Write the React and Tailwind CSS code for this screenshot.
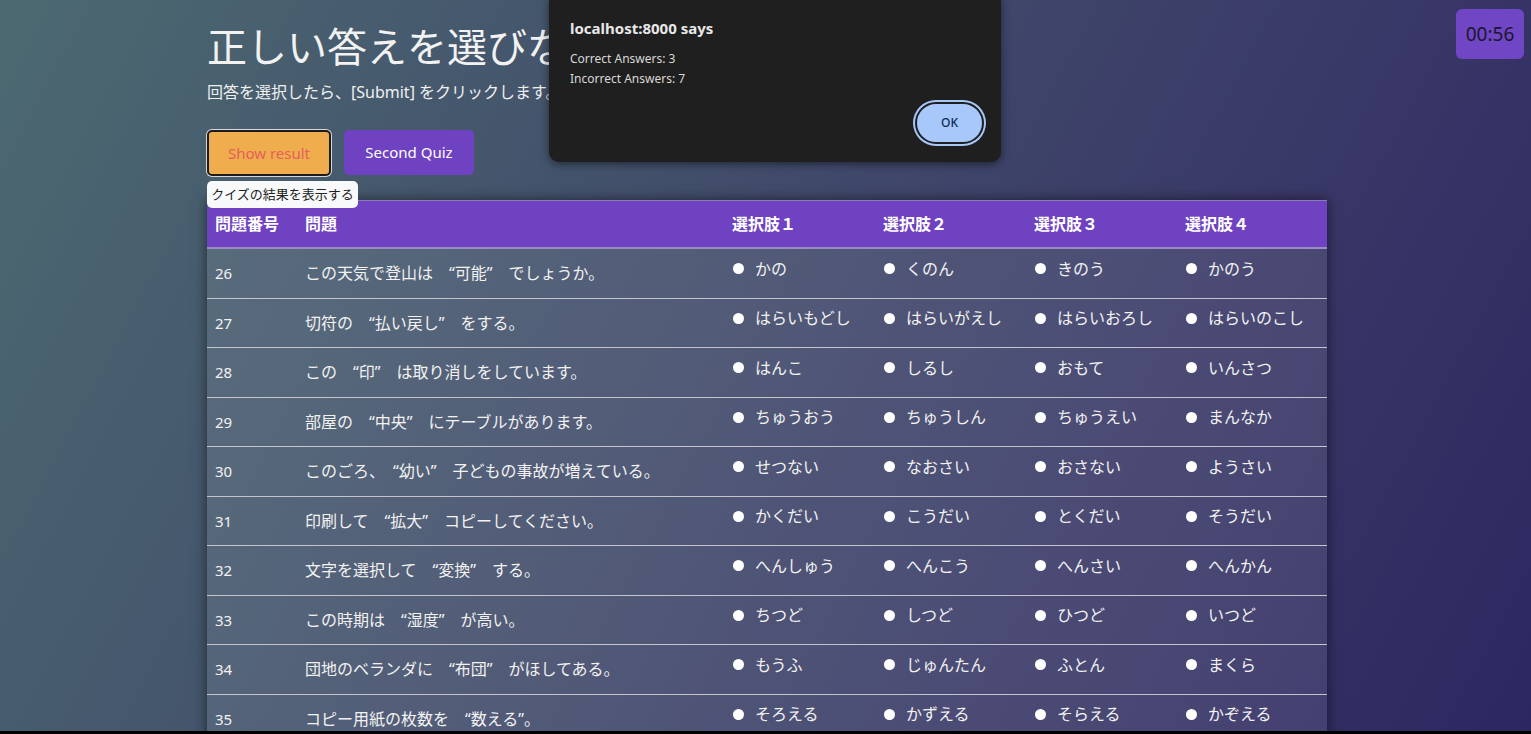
import React from "react";

const rows = [
  { no: 26, q: "この天気で登山は　“可能”　でしょうか。", choices: ["かの", "くのん", "きのう", "かのう"] },
  { no: 27, q: "切符の　“払い戻し”　をする。", choices: ["はらいもどし", "はらいがえし", "はらいおろし", "はらいのこし"] },
  { no: 28, q: "この　“印”　は取り消しをしています。", choices: ["はんこ", "しるし", "おもて", "いんさつ"] },
  { no: 29, q: "部屋の　“中央”　にテーブルがあります。", choices: ["ちゅうおう", "ちゅうしん", "ちゅうえい", "まんなか"] },
  { no: 30, q: "このごろ、　“幼い”　子どもの事故が増えている。", choices: ["せつない", "なおさい", "おさない", "ようさい"] },
  { no: 31, q: "印刷して　“拡大”　コピーしてください。", choices: ["かくだい", "こうだい", "とくだい", "そうだい"] },
  { no: 32, q: "文字を選択して　“変換”　する。", choices: ["へんしゅう", "へんこう", "へんさい", "へんかん"] },
  { no: 33, q: "この時期は　“湿度”　が高い。", choices: ["ちつど", "しつど", "ひつど", "いつど"] },
  { no: 34, q: "団地のベランダに　“布団”　がほしてある。", choices: ["もうふ", "じゅんたん", "ふとん", "まくら"] },
  { no: 35, q: "コピー用紙の枚数を　“数える”。", choices: ["そろえる", "かずえる", "そらえる", "かぞえる"] },
];

const font = { fontFamily: '"Noto Sans", "Noto Sans CJK JP", sans-serif' };

function Choice({ label }) {
  return (
    <div className="flex items-center mb-[9px]">
      <span className="w-[11px] h-[11px] rounded-full bg-white ml-[1px] mr-[11px] shrink-0" />
      <span className="whitespace-nowrap">{label}</span>
    </div>
  );
}

export default function App() {
  return (
    <div className="relative h-[734px] w-full overflow-hidden flex flex-col" style={font}>
      <div className="relative flex-1 overflow-hidden bg-[linear-gradient(118deg,#4c6971_0%,#424f6b_40%,#3a3a68_70%,#2d2760_100%)] text-white">
        <div className="w-[1120px] ml-[207px] pt-[23px]">
          <h1 className="text-[40px] leading-[48px] font-normal text-[#f2f2f2]">正しい答えを選びなさい</h1>
          <p className="mt-[10px] text-[16px] leading-[22px] text-[#f0f0f0]">回答を選択したら、[Submit] をクリックします。</p>

          <div className="mt-[27px] flex gap-[13px]">
            <div className="relative">
              <button className="w-[124px] h-[46px] rounded-[5px] bg-[#f0ad4e] border-2 border-[#1c1c1c] shadow-[0_0_0_1px_#d8d8d8] text-[15px] text-[#e4605a]">
                Show result
              </button>
              <div className="absolute left-0 top-[51px] w-[151px] h-[27px] rounded-[5px] bg-[#f8f9fa] text-[#222] text-[13px] flex items-center justify-center z-10 whitespace-nowrap">
                クイズの結果を表示する
              </div>
            </div>
            <button className="w-[130px] h-[45px] rounded-[5px] bg-[#6f42c1] text-white text-[15px]">
              Second Quiz
            </button>
          </div>

          <div className="mt-[24px] shadow-[0_0_12px_rgba(0,0,0,0.55)] bg-white/[0.09]">
            <div className="grid grid-cols-[90px_427px_151px_151px_151px_151px] h-[49px] items-center bg-[#6f42c1] border-t border-[#8d7ab8] border-b-2 border-b-[#9a8cc4] font-bold text-[16px]">
              <div className="pl-[8px]">問題番号</div>
              <div className="pl-[8px]">問題</div>
              <div className="pl-[8px]">選択肢１</div>
              <div className="pl-[8px]">選択肢２</div>
              <div className="pl-[8px]">選択肢３</div>
              <div className="pl-[8px]">選択肢４</div>
            </div>
            {rows.map((r) => (
              <div
                key={r.no}
                className="grid grid-cols-[90px_427px_151px_151px_151px_151px] h-[49.5px] items-center border-b border-[#c4c4cc] text-[16px] text-[#f2f2f2]"
              >
                <div className="pl-[8px] text-[15px]">{r.no}</div>
                <div className="pl-[8px] whitespace-nowrap">{r.q}</div>
                {r.choices.map((c) => (
                  <div key={c} className="pl-[8px]">
                    <Choice label={c} />
                  </div>
                ))}
              </div>
            ))}
          </div>
        </div>

        <div className="absolute top-[9px] right-[7px] w-[68px] h-[50px] rounded-[6px] bg-[#7046c4] flex items-center justify-center text-[19px] text-[#1b1630]">
          00:56
        </div>

        <div className="absolute left-[549px] top-[-8px] w-[452px] h-[170px] rounded-[10px] bg-[#1f1f1f] shadow-[0_2px_8px_rgba(0,0,0,0.5)] px-[21px] pt-[26px]">
          <div className="text-[15px] font-bold text-[#e8e8e8] leading-[20px]">localhost:8000 says</div>
          <div className="mt-[11px] text-[12px] leading-[20px] text-[#d8d8d8]">Correct Answers: 3</div>
          <div className="text-[12px] leading-[20px] text-[#d8d8d8]">Incorrect Answers: 7</div>
          <div className="flex justify-end mt-[13px]">
            <button className="w-[69px] h-[42px] rounded-full bg-[#a8c7fa] border-2 border-[#1f1f1f] shadow-[0_0_0_2px_#a8c7fa] text-[12px] text-[#0b2a5b] font-medium mr-[-4px]">
              OK
            </button>
          </div>
        </div>
      </div>
      <div className="h-[3px] bg-black shrink-0" />
    </div>
  );
}
